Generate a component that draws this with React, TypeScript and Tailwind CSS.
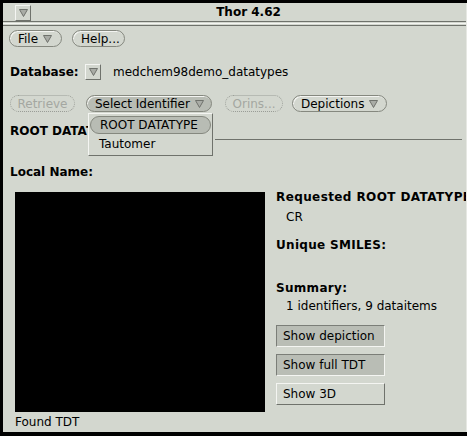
import React from "react";

function Tri() {
  return (
    <svg width="9" height="8" viewBox="0 0 9 8" className="shrink-0">
      <polygon points="0.5,0.5 8.5,0.5 4.5,7.5" fill="#a9aca6" stroke="#6f726c" strokeWidth="1" />
    </svg>
  );
}

function Pill({
  children,
  pressed,
  disabled,
  className = "",
}: {
  children: React.ReactNode;
  pressed?: boolean;
  disabled?: boolean;
  className?: string;
}) {
  const base = "h-[17px] rounded-full flex items-center gap-[5px] px-[8px] text-[12px] leading-[14px] whitespace-nowrap";
  if (disabled) {
    return (
      <div className={`${base} border border-dotted border-[#9a9d97] text-[#a4a7a1] ${className}`}>
        {children}
      </div>
    );
  }
  return (
    <div
      className={`${base} border border-[#85887f] shadow-[inset_1px_1px_0_#f3f4f1] ${
        pressed ? "bg-[#b8bcb4]" : "bg-[#d3d7cf]"
      } ${className}`}
    >
      {children}
    </div>
  );
}

function SideButton({ label, sunken }: { label: string; sunken?: boolean }) {
  return (
    <div
      className={`w-[109px] h-[22px] flex items-center pl-[6px] text-[12px] border ${
        sunken
          ? "bg-[#b9bdb5] border-t-[#7b7e78] border-l-[#7b7e78] border-b-[#f4f5f2] border-r-[#f4f5f2]"
          : "bg-[#d3d7cf] border-t-[#f4f5f2] border-l-[#f4f5f2] border-b-[#6f726c] border-r-[#6f726c]"
      }`}
    >
      {label}
    </div>
  );
}

export default function App() {
  return (
    <div className="relative w-[467px] h-[436px] bg-black pt-[3px] pl-[3px] pb-[4px] overflow-hidden [font-family:'DejaVu_Sans',sans-serif] text-black">
      <div className="h-full bg-[#d3d7cf] flex flex-col border-r border-[#e6e8e3]">
        {/* title bar */}
        <div className="h-[18px] flex items-center">
          <div className="ml-[12px] w-[16px] h-[16px] mt-[2px] flex items-center justify-center border border-t-[#f4f5f2] border-l-[#f4f5f2] border-b-[#6f726c] border-r-[#6f726c]">
            <Tri />
          </div>
          <div className="flex-1 text-center text-[12px] font-bold leading-[14px]">Thor 4.62</div>
        </div>
        <div className="h-[5px] border-t border-b border-[#6f726c] flex flex-col justify-center">
          <div className="h-px bg-[#f4f5f2]" />
        </div>

        {/* menu row */}
        <div className="mt-[4px] ml-[6px] flex gap-[10px]">
          <Pill className="w-[53px]">
            File <Tri />
          </Pill>
          <Pill className="w-[53px]">Help...</Pill>
        </div>

        {/* database row */}
        <div className="mt-[17px] ml-[7px] h-[16px] flex items-center text-[12px] leading-[14px]">
          <span className="font-bold w-[75px]">Database:</span>
          <div className="w-[16px] h-[16px] flex items-center justify-center border border-t-[#f4f5f2] border-l-[#f4f5f2] border-b-[#6f726c] border-r-[#6f726c]">
            <Tri />
          </div>
          <span className="ml-[12px]">medchem98demo_datatypes</span>
        </div>

        {/* action row */}
        <div className="mt-[15px] ml-[7px] flex items-center">
          <Pill disabled className="w-[65px] justify-center">Retrieve</Pill>
          <Pill pressed className="ml-[11px] w-[126px]">
            Select Identifier <Tri />
          </Pill>
          <Pill disabled className="ml-[13px] w-[58px] justify-center">Orins...</Pill>
          <Pill className="ml-[9px] w-[95px]">
            Depictions <Tri />
          </Pill>
        </div>

        {/* section header, partly hidden by the open menu */}
        <div className="mt-[12px] ml-[7px] h-[16px] flex items-start">
          <div className="w-[78px] h-[14px] overflow-hidden text-[12px] font-bold leading-[14px] whitespace-nowrap">
            ROOT DATATYPE
          </div>
          <div className="flex-1 ml-[127px] mt-[15px] mr-[4px] border-t border-[#6f726c]" />
        </div>

        <div className="mt-[25px] ml-[7px] text-[12px] font-bold leading-[14px]">Local Name:</div>

        {/* main area */}
        <div className="mt-[11px] ml-[12px] flex">
          <div className="flex flex-col">
            <div className="mt-[2px] w-[250px] h-[220px] bg-black" />
            <div className="mt-[3px] text-[12px] leading-[14px]">Found TDT</div>
          </div>
          <div className="ml-[11px] flex flex-col text-[12px] leading-[14px] whitespace-nowrap overflow-hidden flex-1">
            <div className="font-bold tracking-[0.4px]">Requested ROOT DATATYPE</div>
            <div className="mt-[6px] ml-[10px]">CR</div>
            <div className="mt-[14px] font-bold tracking-[0.3px]">Unique SMILES:</div>
            <div className="mt-[29px] font-bold tracking-[0.3px]">Summary:</div>
            <div className="mt-[4px] ml-[10px]">1 identifiers, 9 dataitems</div>
            <div className="mt-[12px] flex flex-col gap-[7px]">
              <SideButton label="Show depiction" sunken />
              <SideButton label="Show full TDT" sunken />
              <SideButton label="Show 3D" />
            </div>
          </div>
        </div>
      </div>

      {/* open dropdown menu */}
      <div className="absolute left-[88px] top-[113px] w-[125px] h-[43px] bg-[#d3d7cf] border border-t-[#f4f5f2] border-l-[#f4f5f2] border-b-[#6f726c] border-r-[#6f726c] text-[12px] leading-[14px]">
        <div className="mt-[2px] mx-[1px] h-[18px] rounded-full bg-[#b8bcb4] border border-[#85887f] flex items-center pl-[9px]">
          ROOT DATATYPE
        </div>
        <div className="mt-[3px] pl-[10px]">Tautomer</div>
      </div>
    </div>
  );
}
